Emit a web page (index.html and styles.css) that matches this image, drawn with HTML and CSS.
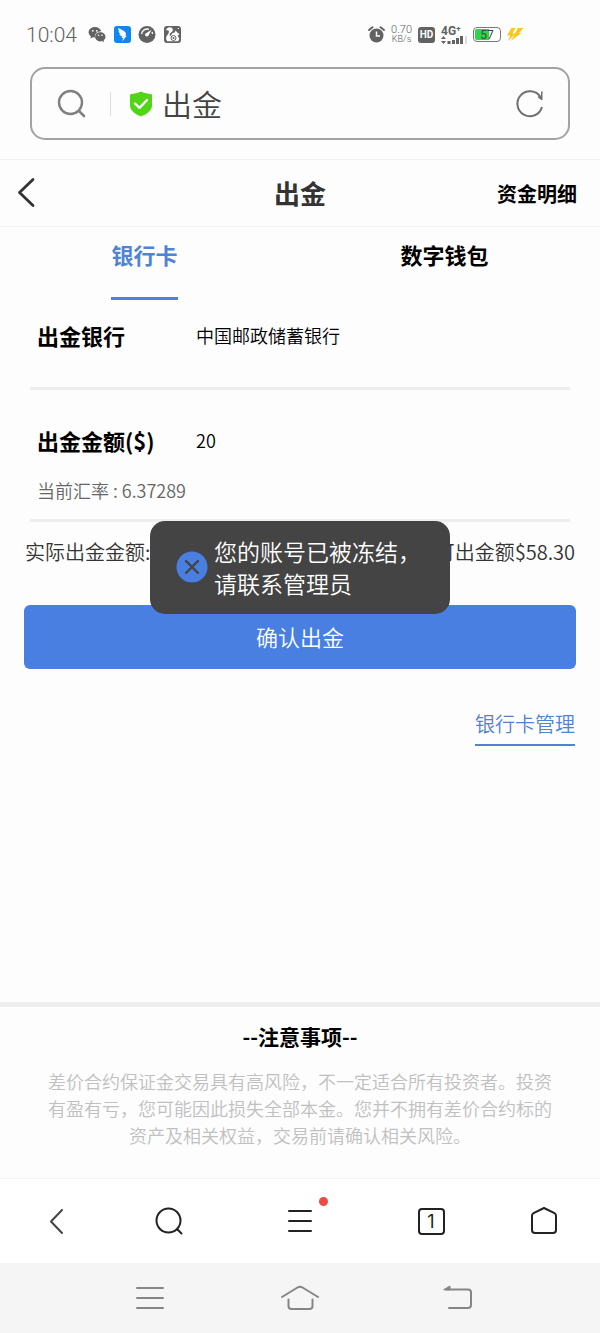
FILE: index.html
```html
<!DOCTYPE html>
<html lang="zh-CN">
<head>
  <meta charset="UTF-8" />
  <meta name="viewport" content="width=device-width, initial-scale=1.0" />
  <title>出金</title>
  <link rel="stylesheet" href="styles.css">
</head>
<body>
  <div class="statusbar">
    <span class="clock">10:04</span>
    <div class="status-apps">
      <svg width="18" height="18" viewBox="0 0 18 18">
        <path d="M7 1C3.400 1 .6 3.300.6 6.300c0 1.700.9 3.100 2.300 4.100L2.400 12.600l2.500-1.300c.6.200 1.300.3 2 .3C6.400 8 9 5.400 13.200 5.300 12.500 2.800 10 1 7 1z" fill="#626262"/>
        <path d="M12.300 6.200c-3 0-5.200 2-5.200 4.600s2.200 4.600 5.200 4.600c.6 0 1.200-.1 1.800-.3l2 1.200-.5-1.900c1.200-.9 1.900-2.200 1.900-3.600 0-2.600-2.200-4.600-5.200-4.600z" fill="#626262"/>
        <g fill="#fff"><circle cx="4.800" cy="4.800" r=".9"/><circle cx="8.800" cy="4.800" r=".9"/><circle cx="10.600" cy="9.300" r=".8"/><circle cx="14" cy="9.300" r=".8"/></g>
      </svg>
      <svg width="18" height="18" viewBox="0 0 18 18">
        <rect x="1" y="0" width="17" height="17" rx="3" fill="#0f86f5"/>
        <path d="M5.200 2c2.500 1.200 5.600 2.400 7.300 4.400.8 1 .4 2.200-.2 3.400h1.300l-4.300 5.700.8-3.600H8.500l.8-1.500C7.500 10 6.600 9 6.400 8l1.600.2C6.300 7.100 5.500 6 5.500 5l1.400.6C5.600 4.500 5 3.300 5.200 2z" fill="#fff"/>
      </svg>
      <svg width="18" height="18" viewBox="0 0 18 18">
        <circle cx="9" cy="8.500" r="8.500" fill="#626262"/>
        <path d="M3.500 8A5.600 5.600 0 0 1 11 3.400M14 6a5 5 0 0 1 .5 2" fill="none" stroke="#fff" stroke-width="1.300"/>
        <path d="M13.600 3.700L10.500 9.500a1.800 1.800 0 1 1-2.500-2.300z" fill="#fff"/>
      </svg>
      <svg width="18" height="18" viewBox="0 0 18 18">
        <rect x="1" y="0" width="17" height="17" rx="3" fill="#626262"/>
        <path d="M3 4.500C3.500 2.200 5 1.200 6.800 1.200c2 0 3.200 1.300 3 3-.2 1.400-1.600 2-2.600 3C6 8.500 6.600 9.800 8 10c.3-2.300 1.800-3.500 3.700-3.500l1-2.200 1.200 1.900c1.300.4 2 1.300 2.400 2.600l-1.800.8 1.800 2.800-1 2.800H4.200C2.500 12.800 3 10.600 4.400 9 5.500 7.700 6.300 6 5.700 4.700c-.7-.6-1.700-.5-2.700-.2z" fill="#fff"/>
        <circle cx="10.500" cy="12" r="2.500" fill="#fff" stroke="#626262"/>
        <circle cx="10.500" cy="12" r="1" fill="#626262"/>
        <path d="M14.800 2.500h1.200" stroke="#fff"/>
      </svg>
    </div>
    <div class="status-system">
      <svg width="17" height="18" viewBox="0 0 17 18">
        <circle cx="8.500" cy="9.500" r="7" fill="#626262"/>
        <path d="M1 4L4.500 1.300M12.500 1.300L16 4" stroke="#626262" stroke-width="2" stroke-linecap="round"/>
        <path d="M8.500 5.500V10H12" fill="none" stroke="#fff" stroke-width="1.500"/>
      </svg>
      <div class="speed"><span>0.70</span><small>KB/s</small></div>
      <span class="hd">HD</span>
      <div class="signal">
        <span>4G⁺</span>
        <svg width="26" height="8" viewBox="0 0 26 8">
          <path d="M0 3l2.500-3L5 3zM0 5l2.500 3L5 5z" fill="#626262"/>
          <path d="M8 8V5M12.500 8V4M16.500 8V2M20.500 8V0" stroke="#626262" stroke-width="3"/>
          <path d="M25 8V0" stroke="#ddd" stroke-width="2"/>
        </svg>
      </div>
      <div class="battery"><span>57</span></div>
      <svg width="17" height="16" viewBox="0 0 17 16">
        <path d="M4.500 1h4L5.500 6.500h3L1 14l2.200-5.500H0z" fill="#fcc51c"/>
        <path d="M11 1h5.500L12 6h2.500L3.500 14l4-6H7z" fill="#fcc51c"/>
      </svg>
    </div>
  </div>

  <form class="search" onsubmit="return false">
    <svg width="30" height="30" viewBox="0 0 30 30">
      <circle cx="13.500" cy="13.500" r="11.500" fill="none" stroke="#808080" stroke-width="2.400"/>
      <path d="M22 22l5 5" stroke="#808080" stroke-width="2.600" stroke-linecap="round"/>
    </svg>
    <i class="split"></i>
    <svg width="24" height="26" viewBox="0 0 24 26">
      <path d="M12 .5c3 1.800 7 2.300 9.800 2.500.8.100 1.200.5 1.200 1.300v10.500c0 5.200-5.600 8.600-11 10.700C6.600 23.400 1 20 1 14.800V4.300C1 3.500 1.400 3.100 2.200 3 5 2.800 9 2.300 12 .5z" fill="#52d515"/>
      <path d="M6 12.500l4.500 4.300L18 9" fill="none" stroke="#fff" stroke-width="2.400" stroke-linecap="round" stroke-linejoin="round"/>
    </svg>
    <input type="text" id="search" value="出金" aria-label="搜索">
    <button type="button" aria-label="刷新">
      <svg width="30" height="30" viewBox="0 0 30 30" fill="none" stroke="#707070" stroke-width="2">
        <path d="M27 18A12.500 12.500 0 1 1 25.500 8"/>
        <path d="M27 2.500v8.500l-4-3 3-.5z" fill="#707070" stroke-width="1"/>
      </svg>
    </button>
  </form>

  <main class="page">
    <header class="header">
      <a href="#" class="back" aria-label="返回">
        <svg width="20" height="32" viewBox="0 0 20 32">
          <path d="M18 2.500L4.500 15.500 18 28.500" fill="none" stroke="#333" stroke-width="2.800" stroke-linecap="round" stroke-linejoin="round"/>
        </svg>
      </a>
      <h1>出金</h1>
      <a href="#" class="detail">资金明细</a>
    </header>

    <nav class="tabs">
      <button class="tab active">银行卡</button>
      <button class="tab">数字钱包</button>
    </nav>

    <form class="withdraw" onsubmit="return false">
      <div class="field">
        <div class="row">
          <label for="bank">出金银行</label>
          <input type="text" id="bank" value="中国邮政储蓄银行">
        </div>
      </div>
      <div class="field">
        <div class="row">
          <label for="amount">出金金额($)</label>
          <input type="text" id="amount" value="20">
        </div>
        <p class="rate">当前汇率 : 6.37289</p>
      </div>
      <div class="summary">
        <span>实际出金金额:</span>
        <span>可出金额$58.30</span>
      </div>
      <button class="submit">确认出金</button>
      <a href="#" class="manage">银行卡管理</a>
    </form>

    <div class="toast" role="alert">
      <svg width="32" height="32" viewBox="0 0 32 32">
        <circle cx="16" cy="16" r="15.500" fill="#487fe0"/>
        <path d="M10 10l12 12M22 10L10 22" stroke="#444" stroke-width="2.400" stroke-linecap="round"/>
      </svg>
      <p>您的账号已被冻结，请联系管理员</p>
    </div>

    <section class="notice">
      <h2>--注意事项--</h2>
      <p>差价合约保证金交易具有高风险，不一定适合所有投资者。投资有盈有亏，您可能因此损失全部本金。您并不拥有差价合约标的资产及相关权益，交易前请确认相关风险。</p>
    </section>
  </main>

  <nav class="toolbar">
    <button aria-label="后退">
      <svg width="32" height="32" viewBox="0 0 32 32"><path d="M22 5L11 16.500 22 28" stroke="#444"/></svg>
    </button>
    <button aria-label="搜索">
      <svg width="32" height="32" viewBox="0 0 32 32"><circle cx="15.500" cy="15.500" r="12"/><path d="M24.500 24.500l4 4"/></svg>
    </button>
    <button class="menu" aria-label="菜单">
      <svg width="32" height="32" viewBox="0 0 32 32"><path d="M5 6h22M5 16h22M5 26h22"/></svg>
      <i class="dot"></i>
    </button>
    <button aria-label="标签页"><span class="pages">1</span></button>
    <button aria-label="主页">
      <svg width="32" height="32" viewBox="0 0 32 32"><path d="M16 3l10.500 5.200q1.500.8 1.500 2.600V25q0 3-3 3H7q-3 0-3-3V10.800q0-1.800 1.500-2.600z"/></svg>
    </button>
  </nav>

  <nav class="system-nav">
    <button aria-label="最近任务">
      <svg width="40" height="30" viewBox="0 0 40 30"><path d="M7 5h26M7 15h26M7 25h26"/></svg>
    </button>
    <button aria-label="桌面">
      <svg width="40" height="30" viewBox="0 0 40 30"><path d="M2 14l15.500-9.500q2.500-1.500 5 0L38 14M8.500 16.500V23q0 3 3 3h18q3 0 3-3v-6.500"/></svg>
    </button>
    <button aria-label="返回">
      <svg width="40" height="30" viewBox="-8 0 40 30"><path d="M8 6.500h22q3 0 3 3V22q0 3-3 3H11"/><path d="M6 6.500l6-3.500v3.500z" fill="#858585" stroke-width="1"/></svg>
    </button>
  </nav>
</body>
</html>
```

FILE: styles.css
```css
* {
  box-sizing: border-box;
}
body {
  font-family: "Noto Sans CJK SC", sans-serif;
  font-weight: 350;
  background: #fdfdfd;
  color: #000;
  margin: 0;
  display: flex;
  flex-direction: column;
  min-height: 100vh;
}
h1, h2, p {
  margin: 0;
}
a {
  text-decoration: none;
}
button, input {
  font-family: inherit;
  font-weight: inherit;
  color: inherit;
  background: none;
  border: none;
  outline: none;
  padding: 0;
  margin: 0;
}
button {
  cursor: pointer;
}
svg {
  display: block;
  flex: none;
}

/* status bar */
.statusbar {
  display: flex;
  align-items: center;
  height: 67px;
  padding: 2px 76px 0 26px;
  color: #626262;
}
.clock {
  font-family: Roboto, sans-serif;
  font-size: 21px;
  line-height: 24px;
  margin-right: 11px;
}
.status-apps {
  display: flex;
  gap: 7px;
}
.status-system {
  display: flex;
  align-items: center;
  gap: 6px;
  margin-left: auto;
}
.speed {
  display: flex;
  flex-direction: column;
  align-items: center;
  font-family: Roboto, sans-serif;
  font-size: 11px;
  line-height: 10px;
}
.speed small {
  font-size: 9px;
  line-height: 9px;
}
.hd {
  background: #626262;
  color: #fff;
  border-radius: 3px;
  font: bold 10px/16px Roboto, sans-serif;
  width: 17px;
  text-align: center;
}
.signal span {
  display: block;
  font: bold 12px/10px Roboto, sans-serif;
}
.battery {
  width: 28px;
  height: 15px;
  padding: 1px;
  border: 1px solid #777;
  border-radius: 4px;
  background: linear-gradient(90deg, #2cd64a 60%, #fff 60%) content-box;
  color: #444;
  font: 12px/12px Roboto, sans-serif;
  text-align: center;
}

/* address bar */
.search {
  display: flex;
  align-items: center;
  height: 73px;
  margin: 0 30px 19px;
  padding: 0 23px 0 25px;
  border: 2px solid #a3a3a3;
  border-radius: 15px;
}
.split {
  width: 1px;
  height: 24px;
  background: #ddd;
  margin: 0 18px 0 23px;
}
.search input {
  flex: 1;
  min-width: 0;
  font-size: 30px;
  line-height: 44px;
  color: #444;
  margin-left: 9px;
  padding-bottom: 2px;
}

/* page */
.page {
  position: relative;
  flex: 1;
  display: flex;
  flex-direction: column;
  border-top: 1px solid #f1f1f1;
}
.header {
  display: grid;
  grid-template-columns: 1fr auto 1fr;
  align-items: center;
  height: 67px;
  padding: 0 23px;
  border-bottom: 1px solid #f3f3f3;
}
.header h1 {
  font-size: 26px;
  line-height: 38px;
  color: #333;
}
.back {
  justify-self: start;
  margin-left: -8px;
}
.detail {
  justify-self: end;
  font-size: 20px;
  font-weight: bold;
  color: #000;
}
.tabs {
  display: flex;
  justify-content: space-around;
}
.tab {
  height: 73px;
  font-size: 22px;
  font-weight: bold;
  line-height: 32px;
  padding-bottom: 16px;
  border-bottom: 3px solid transparent;
}
.tab.active {
  color: #4f83d3;
  border-color: #4f83d3;
}
.withdraw {
  display: flex;
  flex-direction: column;
  padding: 0 24px;
}
.field {
  margin: 0 6px;
  padding: 19px 7px 36px;
  border-bottom: 3px solid #eee;
}
.field + .field {
  padding: 34px 7px 15px;
}
.row {
  display: flex;
  align-items: center;
}
.row label {
  width: 159px;
  font-size: 22px;
  font-weight: bold;
  line-height: 32px;
}
.row input {
  flex: 1;
  min-width: 0;
  font-size: 18px;
  line-height: 32px;
  height: 32px;
}
.rate {
  font-size: 18px;
  line-height: 28px;
  margin-top: 20px;
  color: #666;
}
.summary {
  display: flex;
  justify-content: space-between;
  margin: 14px 1px 37px;
  font-size: 20px;
  line-height: 32px;
  color: #333;
}
.submit {
  height: 64px;
  border-radius: 6px;
  background: #487fe0;
  color: #fff;
  font-size: 22px;
  padding-bottom: 2px;
}
.manage {
  align-self: flex-end;
  margin: 39px 1px 0;
  padding-bottom: 4px;
  border-bottom: 2px solid #4f83d3;
  color: #4f83d3;
  font-size: 20px;
  line-height: 32px;
}
.toast {
  position: absolute;
  top: 361px;
  left: 25%;
  right: 25%;
  display: flex;
  align-items: center;
  gap: 6px;
  padding: 14px 20px 15px 26px;
  border-radius: 15px;
  background: #444;
  color: #fff;
  font-size: 23px;
  line-height: 32px;
}
.notice {
  margin-top: auto;
  padding: 12px 40px 29px;
  border-top: 5px solid #eee;
  text-align: center;
}
.notice h2 {
  font-size: 21px;
  line-height: 34px;
}
.notice p {
  margin-top: 15px;
  font-size: 18px;
  line-height: 27px;
  color: #c0c0c0;
}

/* browser toolbar */
.toolbar {
  display: flex;
  justify-content: space-between;
  align-items: center;
  height: 85px;
  padding: 0 40px;
  border-top: 1px solid #f2f2f2;
  background: #fff;
}
.toolbar button {
  min-width: 32px;
}
.toolbar svg {
  fill: none;
  stroke: #222;
  stroke-width: 2;
  stroke-linecap: round;
  stroke-linejoin: round;
}
.toolbar .menu {
  position: relative;
  padding: 0 18px;
}
.dot {
  position: absolute;
  top: -8px;
  right: 6px;
  width: 9px;
  height: 9px;
  border-radius: 50%;
  background: #f04a42;
}
.pages {
  display: block;
  width: 27px;
  height: 27px;
  margin: 0 auto;
  border: 2px solid #222;
  border-radius: 4px;
  color: #222;
  font: 18px/23px Inter, sans-serif;
}
.system-nav {
  display: flex;
  justify-content: space-between;
  align-items: center;
  height: 70px;
  padding: 0 130px;
  background: #f5f5f5;
}
.system-nav svg {
  overflow: visible;
  fill: none;
  stroke: #858585;
  stroke-width: 2;
  stroke-linecap: round;
  stroke-linejoin: round;
}
```
